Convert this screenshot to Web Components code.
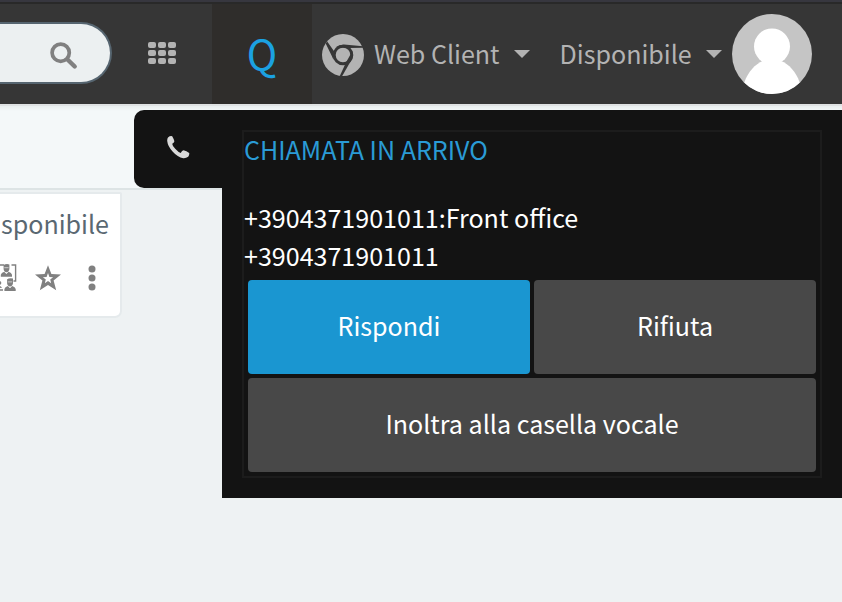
<!DOCTYPE html>
<html lang="it">
<head>
<meta charset="utf-8">
<title>Web Client</title>
<style>
    body {
        margin: 0;
        height: 602px;
        overflow: hidden;
        position: relative;
        background-color: #eef2f3;
        font-family: "Noto Sans CJK SC", "Noto Sans", sans-serif;
        font-size: 25.07px;
    }
</style>
</head>
<body>
    <top-bar>
        <search-box></search-box>
        <app-grid></app-grid>
        <queue-tile>Q</queue-tile>
        <chrome-icon></chrome-icon>
        <drop-down style="margin-left: 10px">Web Client</drop-down>
        <drop-down style="margin-left: 30px">Disponibile</drop-down>
        <user-avatar></user-avatar>
    </top-bar>
    <sub-bar></sub-bar>
    <contact-card>sponibile</contact-card>
    <incoming-call>
        <span slot="title">CHIAMATA IN ARRIVO</span>
        <span slot="caller">+3904371901011:Front office</span>
        <span slot="number">+3904371901011</span>
        <call-button primary>Rispondi</call-button>
        <call-button>Rifiuta</call-button>
        <call-button wide>Inoltra alla casella vocale</call-button>
    </incoming-call>

<script>
    function define(name, html) {
        const template = document.createElement('template');
        template.innerHTML = html;

        window.customElements.define(name, class extends HTMLElement {
            constructor() {
                super();
                this.attachShadow({ mode: 'open' });
                this.shadowRoot.appendChild(template.content.cloneNode(true));
            }
        });
    }

    define('top-bar', `
        <style>
            :host {
                display: flex;
                align-items: center;
                box-sizing: border-box;
                height: 104px;
                border-top: 2px solid #37373f;
                padding-top: 2px;
                background: linear-gradient(#292929 2px, #363636 2px);
                color: #b3b3b3;
            }
        </style>
        <slot></slot>
    `);

    define('search-box', `
        <style>
            :host {
                display: flex;
                align-items: center;
                justify-content: flex-end;
                box-sizing: border-box;
                width: 112px;
                height: 62px;
                margin-bottom: 2px;
                padding-right: 32px;
                border: 2px solid #566570;
                border-left: none;
                border-radius: 0 31px 31px 0;
                background-color: #ecf0f1;
            }
            svg { margin-top: 6px; }
        </style>
        <svg width="28" height="28" viewBox="0 0 28 28" fill="none" stroke="#808080">
            <circle cx="10.7" cy="10.7" r="8.6" stroke-width="3.7"/>
            <path d="M17.5 17.5L24.7 24.5" stroke-width="4.4" stroke-linecap="round"/>
        </svg>
    `);

    define('app-grid', `
        <style>
            :host {
                display: grid;
                grid-template-columns: repeat(3, 8.4px);
                grid-auto-rows: 6.4px;
                gap: 1.6px;
                margin: 0 35.6px 2px 36px;
            }
            i {
                border-radius: 2px;
                background-color: #b3b3b3;
            }
        </style>
        <i></i><i></i><i></i><i></i><i></i><i></i><i></i><i></i><i></i>
    `);

    define('queue-tile', `
        <style>
            :host {
                display: flex;
                align-items: center;
                justify-content: center;
                flex: none;
                box-sizing: border-box;
                width: 100px;
                height: 100px;
                padding-bottom: 5px;
                background-color: #2f2d2b;
                color: #1ba1e2;
                font-size: 41px;
                line-height: 60px;
            }
        </style>
        <slot></slot>
    `);

    define('chrome-icon', `
        <style>
            :host { display: block; height: 42px; margin: 2px 0 0 10px; }
            svg { display: block; }
        </style>
        <svg width="42" height="42" viewBox="0 0 42 42">
            <circle cx="21" cy="21" r="21" fill="#b3b3b3"/>
            <circle cx="21" cy="21" r="8.8" fill="none" stroke="#363636" stroke-width="3"/>
            <g fill="#363636">
                <path d="M14 13Q17.5 10.4 22 10.4L41 12.2V13.8L27 14Z"/>
                <path d="M3.7 9.5L5.2 7.4L12.6 18L11.4 25.6Q10.5 23.8 9.8 22Z"/>
                <path d="M30.4 17Q31.8 21.5 29.4 26L20.2 42H17.8L24 28.5Z"/>
            </g>
        </svg>
    `);

    define('drop-down', `
        <style>
            :host {
                display: flex;
                align-items: center;
                line-height: 38px;
                white-space: nowrap;
            }
            .label { margin-bottom: 2px; }
            .caret {
                margin: 0 0 1px 14px;
                border: 8px solid transparent;
                border-top-color: #b3b3b3;
                border-bottom: none;
            }
        </style>
        <span class="label"><slot></slot></span>
        <span class="caret"></span>
    `);

    define('user-avatar', `
        <style>
            :host { display: block; margin: 0 30px 0 auto; }
            svg { display: block; border-radius: 50%; }
        </style>
        <svg width="80" height="80" viewBox="0 0 80 80">
            <rect width="80" height="80" fill="#c5c5c5"/>
            <g fill="#fff">
                <circle cx="40" cy="32.4" r="18"/>
                <path d="M31 47H49C57 50 64 58 67.5 68V80H12.5V68C16 58 23 50 31 47Z"/>
            </g>
        </svg>
    `);

    define('sub-bar', `
        <style>
            :host {
                display: block;
                box-sizing: border-box;
                height: 86px;
                border-top: 2px solid #dfe2e3;
                border-bottom: 2px solid #dde4e5;
                background: linear-gradient(#e9eeef, #f4f8f9 5px);
            }
        </style>
    `);

    define('contact-card', `
        <style>
            :host {
                display: flex;
                flex-direction: column;
                box-sizing: border-box;
                width: 122px;
                height: 126px;
                margin-top: 2px;
                border: 2px solid #e5eaec;
                border-left: none;
                border-radius: 0 2px 7px 0;
                background-color: #fff;
                color: #5a6872;
                line-height: 38px;
                overflow: hidden;
            }
            .status {
                display: flex;
                justify-content: flex-end;
                padding: 10px 11px 0 0;
            }
            .tools {
                display: flex;
                align-items: center;
                margin-top: 21px;
            }
            svg { display: block; }
        </style>
        <div class="status"><slot></slot></div>
        <div class="tools">
            <svg width="18" height="30" viewBox="0 0 18 30" fill="#808080">
                <path d="M0 2H4M11.5 2H15.6V18H13.5M0 27H3" fill="none" stroke="#808080" stroke-width="1.4"/>
                <path d="M3.6 2Q6 .6 9.4 1.4V6Q9 9 6.5 9.2Q3.8 9 3.6 6ZM.8 13.8V11.8Q1.3 9.6 4.2 8.8L6.4 11L8.6 8.8Q11.6 9.6 12 11.8V13.8Z"/>
                <path d="M7.1 16.2Q9.5 14.8 13 15.6V20.2Q12.6 23.2 10.1 23.4Q7.3 23.2 7.1 20.2ZM4.4 28V26Q4.9 23.8 7.8 23L10 25.2L12.2 23Q15.2 23.8 15.7 26V28Z"/>
                <path d="M4.3 4.7H8.6M7.8 18.9H12.2" stroke="#fff" stroke-width=".6"/>
                <path d="M0 18L1.2 19V20.8L0 22ZM0 23L2.3 24.5L0 25Z"/>
            </svg>
            <svg width="26" height="26" viewBox="0 0 26 26" style="margin-left: 17px">
                <path fill-rule="evenodd" fill="#808080" d="M13 .2L16.4 9L26 9.5L18.6 15.6L21.2 25.2L13 19.9L4.8 25.2L7.4 15.6L0 9.5L9.6 9ZM13 8L11.6 12L7.9 12.2L10.8 14.6L9.8 18.2L13 16.1L16.2 18.2L15.2 14.6L18.1 12.2L14.4 12Z"/>
            </svg>
            <svg width="8" height="26" viewBox="0 0 8 26" fill="#808080" style="margin-left: 27px">
                <circle cx="4" cy="4" r="3.5"/>
                <circle cx="4" cy="13" r="3.5"/>
                <circle cx="4" cy="22" r="3.5"/>
            </svg>
        </div>
    `);

    define('incoming-call', `
        <style>
            /* popup hanging from the top bar, over the page */
            :host {
                position: absolute;
                top: 110px;
                right: 0;
                display: flex;
                align-items: flex-start;
                color: #fff;
                line-height: 38px;
                white-space: nowrap;
            }
            .tab {
                box-sizing: border-box;
                width: 88px;
                height: 78px;
                padding: 26px 0 0 33px;
                border-radius: 10px 0 0 10px;
                background-color: #131313;
            }
            .tab svg { display: block; }
            .panel {
                box-sizing: border-box;
                width: 620px;
                height: 388px;
                padding: 20px;
                background-color: #131313;
            }
            .frame {
                box-sizing: border-box;
                width: 580px;
                height: 348px;
                border: 2px solid #1c1c1c;
            }
            .text {
                display: flex;
                flex-direction: column;
                margin-top: -2px;
                height: 146px;
            }
            .title {
                margin-bottom: 30px;
                color: #2a9bd6;
            }
            .buttons {
                display: grid;
                grid-template-columns: 282px 282px;
                grid-auto-rows: 94px;
                gap: 4px;
                padding: 4px;
            }
        </style>
        <div class="tab">
            <svg width="23" height="23" viewBox="0 0 23 23" fill="#d9d9d9">
                <path d="M1 1.5Q3 -.3 5.2 .2Q6.6 2.5 7.4 5.2Q7.3 6.4 5.3 7.7Q5 9.3 8.2 12.7Q11.5 16.3 13.7 17Q15 14.6 16.5 14.3Q19.5 15 22.2 17Q22.6 18.5 21.2 20.8Q19 22.4 16.3 22.2Q10.5 21 5.8 15.7Q.8 10.5 .2 5Q.1 2.8 1 1.5Z"/>
            </svg>
        </div>
        <div class="panel">
            <div class="frame">
                <div class="text">
                    <div class="title"><slot name="title"></slot></div>
                    <div><slot name="caller"></slot></div>
                    <div><slot name="number"></slot></div>
                </div>
                <div class="buttons"><slot></slot></div>
            </div>
        </div>
    `);

    define('call-button', `
        <style>
            :host {
                display: flex;
                align-items: center;
                justify-content: center;
                box-sizing: border-box;
                padding-bottom: 4px;
                border-radius: 4px;
                background-color: #484848;
            }
            :host([primary]) { background-color: #1a96d1; }
            :host([wide]) { grid-column: span 2; }
        </style>
        <slot></slot>
    `);
</script>
</body>
</html>
